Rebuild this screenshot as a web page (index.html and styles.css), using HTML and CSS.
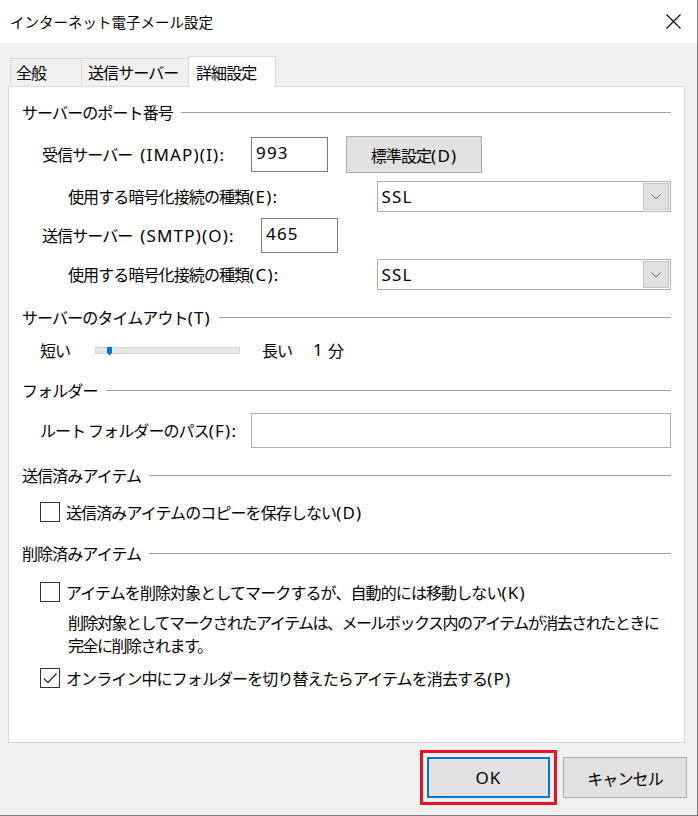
FILE: index.html
```html
<!DOCTYPE html>
<html lang="ja">
<head>
    <meta charset="UTF-8">
    <meta name="viewport" content="width=device-width, initial-scale=1.0">
    <title>インターネット電子メール設定</title>
    <link rel="stylesheet" href="styles.css">
</head>
<body>
    <div class="window">
        <div class="titlebar">
            <span class="title">インターネット電子メール設定</span>
            <svg class="close" width="15" height="15" viewBox="0 0 15 15">
                <path d="M0.5 0.5 L14.5 14.5 M14.5 0.5 L0.5 14.5" stroke="#000" stroke-width="1.1" fill="none"/>
            </svg>
        </div>

        <ul class="tabs">
            <li class="tab tab-general">全般</li>
            <li class="tab tab-send">送信サーバー</li>
            <li class="tab tab-detail active">詳細設定</li>
        </ul>

        <div class="panel">
            <div class="sec mt15"><span>サーバーのポート番号</span><i class="rule"></i></div>

            <div class="row row-imap">
                <label class="lbl lbl-imap">受信サーバー <span class="en">(IMAP)(I):</span></label>
                <div class="textbox port en">993</div>
                <button class="btn btn-default">標準設定<span class="en">(D)</span></button>
            </div>

            <div class="row row-enc mt8">
                <label class="lbl lbl-enc">使用する暗号化接続の種類<span class="en">(E):</span></label>
                <div class="select">
                    <span class="en">SSL</span>
                    <span class="drop"><svg width="10" height="6" viewBox="0 0 10 6"><path d="M0.5 0.5 L5 5 L9.5 0.5" stroke="#666" stroke-width="1" fill="none"/></svg></span>
                </div>
            </div>

            <div class="row row-smtp mt6">
                <label class="lbl lbl-smtp">送信サーバー <span class="en">(SMTP)(O):</span></label>
                <div class="textbox port en">465</div>
            </div>

            <div class="row row-enc mt6">
                <label class="lbl lbl-enc">使用する暗号化接続の種類<span class="en">(C):</span></label>
                <div class="select">
                    <span class="en">SSL</span>
                    <span class="drop"><svg width="10" height="6" viewBox="0 0 10 6"><path d="M0.5 0.5 L5 5 L9.5 0.5" stroke="#666" stroke-width="1" fill="none"/></svg></span>
                </div>
            </div>

            <div class="sec mt17"><span>サーバーのタイムアウト<span class="en">(T)</span></span><i class="rule"></i></div>

            <div class="row row-slider">
                <span class="lbl-short">短い</span>
                <div class="track"><i class="thumb"></i></div>
                <span class="lbl-long">長い</span>
                <span class="en minutes">1</span>
                <span>分</span>
            </div>

            <div class="sec mt20"><span>フォルダー</span><i class="rule"></i></div>

            <div class="row row-folder">
                <label class="lbl lbl-folder">ルート フォルダーのパス<span class="en">(F):</span></label>
                <div class="textbox path"></div>
            </div>

            <div class="sec mt17"><span>送信済みアイテム</span><i class="rule"></i></div>

            <div class="row row-check mt17">
                <span class="checkbox"></span>
                <span>送信済みアイテムのコピーを保存しない<span class="en">(D)</span></span>
            </div>

            <div class="sec mt21"><span>削除済みアイテム</span><i class="rule"></i></div>

            <div class="row row-check mt19">
                <span class="checkbox"></span>
                <span>アイテムを削除対象としてマークするが、自動的には移動しない<span class="en">(K)</span></span>
            </div>

            <p class="desc">削除対象としてマークされたアイテムは、メールボックス内のアイテムが消去されたときに<br>完全に削除されます。</p>

            <div class="row row-check mt11">
                <span class="checkbox">
                    <svg width="18" height="18" viewBox="0 0 18 18"><path d="M3 9.5 L7 13.5 L15.5 4.5" stroke="#333" stroke-width="1.3" fill="none"/></svg>
                </span>
                <span>オンライン中にフォルダーを切り替えたらアイテムを消去する<span class="en">(P)</span></span>
            </div>
        </div>

        <div class="footer">
            <button class="btn btn-ok en">OK</button>
            <button class="btn btn-cancel">キャンセル</button>
        </div>
    </div>
</body>
</html>
```

FILE: styles.css
```css
* {
    margin: 0;
    padding: 0;
    box-sizing: border-box;
}

ul {
    list-style: none;
}

body {
    font-family: "Noto Sans CJK JP", sans-serif;
    font-size: 16px;
    letter-spacing: -0.9px;
    line-height: 20px;
    color: #000;
    background: #f0f0f0;
}

/* 英数字はメイリオ風に広めに */
.en {
    font-family: "Noto Sans", "Noto Sans CJK JP", sans-serif;
    font-size: 17px;
    letter-spacing: 1.2px;
}

.window {
    width: 698px;
    height: 816px;
    display: flex;
    flex-direction: column;
    background: #f0f0f0;
    border-right: 1px solid #7a7a7a;
    border-bottom: 1px solid #7a7a7a;
}

.titlebar {
    height: 43px;
    background: #fff;
    display: flex;
    align-items: center;
    justify-content: space-between;
    padding: 0 16px 0 10px;
}

.title {
    font-size: 14.5px;
    letter-spacing: 0;
}

.close {
    display: block;
}

/* タブ */
.tabs {
    height: 43px;
    display: flex;
    align-items: flex-end;
    padding-left: 10px;
}

.tab {
    height: 28px;
    line-height: 27px;
    border: 1px solid #d9d9d9;
    border-bottom: none;
    background: #f0f0f0;
    padding-left: 5px;
}

.tab + .tab {
    margin-left: -1px;
}

.tab-general {
    width: 72px;
}

.tab-send {
    width: 108px;
    padding-left: 6px;
}

.tab-detail {
    width: 88px;
    padding-left: 7px;
}

.tabs .active {
    position: relative;
    z-index: 1;
    height: 31px;
    line-height: 30px;
    margin-bottom: -1px;
    background: #fff;
}

/* パネル */
.panel {
    margin-left: 8px;
    width: 677px;
    height: 657px;
    background: #fff;
    border: 1px solid #d9d9d9;
    padding: 0 13px;
}

.sec {
    display: flex;
    align-items: center;
    height: 20px;
    white-space: nowrap;
}

.rule {
    flex: 1;
    height: 1px;
    background: #a0a0a0;
    margin-left: 8px;
}

.row {
    display: flex;
    align-items: center;
    white-space: nowrap;
}

.mt6 { margin-top: 6px; }
.mt8 { margin-top: 8px; }
.mt11 { margin-top: 11px; }
.mt15 { margin-top: 15px; }
.mt17 { margin-top: 17px; }
.mt19 { margin-top: 19px; }
.mt20 { margin-top: 20px; }
.mt21 { margin-top: 21px; }

.row-imap {
    height: 37px;
    margin-top: 14px;
    padding-left: 20px;
}

.row-smtp {
    height: 35px;
    padding-left: 20px;
}

.row-enc {
    height: 31px;
    padding-left: 46px;
}

.lbl-imap { width: 209px; }
.lbl-smtp { width: 219px; }
.lbl-enc { width: 310px; }
.lbl-folder { width: 211px; }

.lbl-imap .en,
.lbl-smtp .en {
    margin-left: 5px;
}

.textbox {
    height: 35px;
    border: 1px solid #7a7a7a;
    background: #fff;
    padding: 5px 0 0 4px;
}

.port {
    width: 77px;
}

.path {
    width: 421px;
    border-color: #adadad;
}

.btn {
    font-family: inherit;
    font-size: inherit;
    letter-spacing: inherit;
    color: #000;
    background: #e1e1e1;
    border: 1px solid #adadad;
}

.btn.en {
    font-family: "Noto Sans", sans-serif;
    font-size: 17px;
    letter-spacing: 1.2px;
}

.btn-default {
    width: 136px;
    height: 37px;
    margin-left: 18px;
}

.select {
    width: 294px;
    height: 31px;
    border: 1px solid #adadad;
    background: #fff;
    display: flex;
    align-items: center;
    justify-content: space-between;
    padding: 1px 1px 1px 3px;
}

.drop {
    width: 26px;
    height: 27px;
    background: #e1e1e1;
    border: 1px solid #c4c4c4;
    display: flex;
    align-items: center;
    justify-content: center;
}

/* スライダー */
.row-slider {
    height: 20px;
    margin-top: 13px;
    padding-left: 18px;
}

.lbl-short {
    width: 55px;
}

.track {
    position: relative;
    width: 145px;
    height: 7px;
    background: #e7e7e7;
    border: 1px solid #d6d6d6;
}

.thumb {
    position: absolute;
    left: 11px;
    top: -1px;
    width: 5px;
    height: 9px;
    background: #0078d7;
    clip-path: polygon(0 0, 100% 0, 100% 70%, 50% 100%, 0 70%);
}

.lbl-long {
    width: 51px;
    margin-left: 22px;
}

.minutes {
    width: 15px;
}

.row-folder {
    height: 35px;
    margin-top: 13px;
    padding-left: 18px;
}

/* チェックボックス */
.row-check {
    height: 20px;
    padding-left: 18px;
}

.checkbox {
    width: 20px;
    height: 20px;
    border: 1px solid #333;
    background: #fff;
    margin-right: 6px;
    display: flex;
    align-items: center;
    justify-content: center;
}

.desc {
    margin-top: 9px;
    padding-left: 46px;
    line-height: 23px;
    letter-spacing: -1.5px;
    white-space: nowrap;
}

/* ボタン */
.footer {
    display: flex;
    justify-content: flex-end;
    padding: 14px 10px 0 0;
}

.btn-ok {
    width: 123px;
    height: 41px;
    border: 2px solid #0078d7;
    outline: 3px solid #e81123;
    outline-offset: 4px;
}

.btn-cancel {
    width: 124px;
    height: 41px;
    margin-left: 13px;
}
```
